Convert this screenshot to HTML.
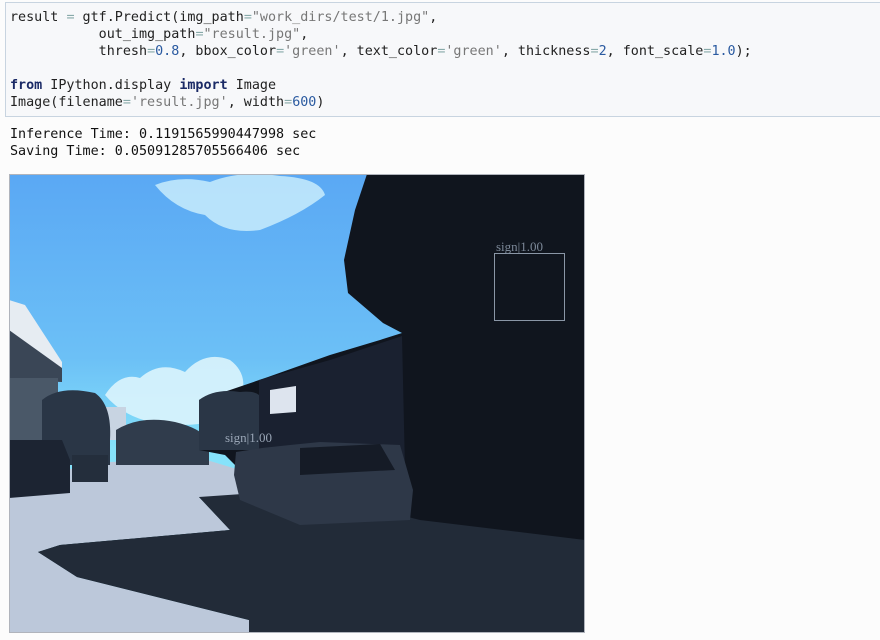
<!DOCTYPE html>
<html><head><meta charset="utf-8"><style>
html,body{margin:0;padding:0;background:#fcfcfc;width:880px;height:640px;overflow:hidden;position:relative}
.cell{position:absolute;left:5px;top:2px;width:880px;height:115px;background:#f7f8fa;border:1px solid #c8d4e0;box-sizing:border-box}
pre{margin:0;font-family:"DejaVu Sans Mono","Liberation Mono",monospace;font-size:13.4px;line-height:17px;color:#222}
.code{position:absolute;left:10px;top:9px}
.out{position:absolute;left:10px;top:126px;color:#111}
.k{color:#1a2a66;font-weight:bold}.s{color:#777}.n{color:#2a5aa0}.o{color:#8aa}
</style></head><body>
<div class="cell"></div>
<pre class="code">result <span class="o">=</span> gtf.Predict(img_path<span class="o">=</span><span class="s">"work_dirs/test/1.jpg"</span>,
           out_img_path<span class="o">=</span><span class="s">"result.jpg"</span>,
           thresh<span class="o">=</span><span class="n">0.8</span>, bbox_color<span class="o">=</span><span class="s">'green'</span>, text_color<span class="o">=</span><span class="s">'green'</span>, thickness<span class="o">=</span><span class="n">2</span>, font_scale<span class="o">=</span><span class="n">1.0</span>);

<span class="k">from</span> IPython.display <span class="k">import</span> Image
Image(filename<span class="o">=</span><span class="s">'result.jpg'</span>, width<span class="o">=</span><span class="n">600</span>)</pre>
<pre class="out">Inference Time: 0.1191565990447998 sec
Saving Time: 0.05091285705566406 sec</pre>
<svg style="position:absolute;left:0;top:0" width="880" height="640" viewBox="0 0 880 640">
<defs>
<linearGradient id="sky" x1="0" y1="0" x2="0" y2="1">
<stop offset="0" stop-color="#5aa8f4"/><stop offset="0.4" stop-color="#6cc0f6"/><stop offset="0.6" stop-color="#86e2fa"/><stop offset="1" stop-color="#8ae6fb"/></linearGradient>
<clipPath id="c"><rect x="9" y="174" width="576" height="459"/></clipPath>
</defs>
<g clip-path="url(#c)">
<rect x="9" y="174" width="576" height="459" fill="url(#sky)"/>
<path d="M155 185 Q180 175 210 182 Q240 170 280 176 Q320 178 325 195 Q300 215 260 230 Q225 235 205 215 Q175 210 155 185Z" fill="#c8ecfb" opacity="0.85"/>
<path d="M105 395 Q120 372 140 378 Q160 360 185 372 Q205 350 230 360 Q250 375 240 400 Q230 425 180 425 Q130 425 105 395Z" fill="#dcf4fc" opacity="0.9"/>
<path d="M9 480 L110 462 L200 458 L240 470 L245 497 L199 497 L230 530 L60 545 L38 552 L77 577 L249 620 L249 633 L9 633Z" fill="#bcc8da"/>
<path d="M9 300 L25 305 L62 362 L62 380 L9 380Z" fill="#e6ecf2"/>
<path d="M9 330 L62 368 L62 382 L9 380Z" fill="#3a4656"/>
<path d="M9 378 L58 378 L58 450 L9 450Z" fill="#4a5868"/>
<path d="M96 407 L126 407 L126 440 L96 440Z" fill="#c8d4e2"/>
<path d="M42 400 Q60 385 95 393 Q112 405 110 440 L110 465 L42 465Z" fill="#2a3646"/>
<path d="M116 430 Q140 415 175 422 Q200 428 209 440 L209 465 L116 465Z" fill="#303c4c"/>
<path d="M9 440 L62 440 L70 460 L70 493 L9 498Z" fill="#1c2432"/>
<path d="M72 455 L108 455 L108 482 L72 482Z" fill="#242e3c"/>
<path d="M367 174 L585 174 L585 633 L249 633 L249 620 L77 577 L38 552 L60 545 L230 530 L199 497 L245 497 L240 470 L225 455 L199 450 L199 400 L230 390 L268 377 L330 355 L380 340 L402 333 L383 323 L348 293 L344 260 L355 210Z" fill="#10151e"/>
<path d="M199 497 L300 490 L420 520 L585 540 L585 633 L249 633 L249 620 L77 577 L38 552 L60 545 L230 530Z" fill="#222b38"/>
<path d="M199 400 Q215 388 240 392 Q260 390 262 400 L262 450 L199 450Z" fill="#2a3646"/>
<path d="M259 380 L330 360 L402 336 L405 470 L300 480 L259 450Z" fill="#1a2130"/>
<path d="M270 390 L296 386 L296 412 L270 414Z" fill="#dde4ee"/>
<path d="M236 452 L262 448 L290 445 L320 442 L400 445 L413 490 L410 520 L300 525 L240 500 L234 475Z" fill="#2e3848"/>
<path d="M300 448 L380 444 L395 470 L300 475Z" fill="#151b26"/>
<rect x="494.5" y="253.5" width="70" height="67" fill="none" stroke="#8a96a6" stroke-width="1"/>
<text x="496" y="251" font-family="Liberation Serif,serif" font-size="13" fill="#7c8898">sign|1.00</text>
<text x="225" y="442" font-family="Liberation Serif,serif" font-size="13" fill="#9aa6b6">sign|1.00</text>
</g>
<rect x="9.5" y="174.5" width="575" height="458" fill="none" stroke="#b0b4bc"/>
</svg>
</body></html>
